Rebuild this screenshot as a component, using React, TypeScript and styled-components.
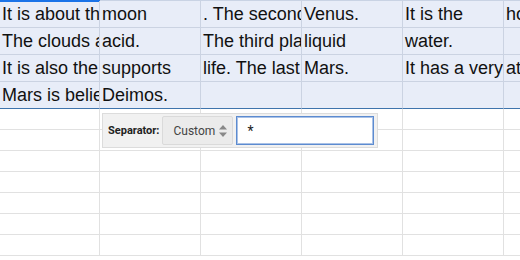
import styled, { createGlobalStyle } from 'styled-components';

const GlobalStyle = createGlobalStyle`
  html, body {
    margin: 0;
    padding: 0;
    background: #ffffff;
    overflow: hidden;
  }
  body {
    font-family: "Liberation Sans", Arial, sans-serif;
  }
`;

const Page = styled.div`
  position: relative;
  width: 520px;
  height: 260px;
  overflow: hidden;
`;

const Sheet = styled.div`
  display: grid;
  grid-template-columns: 100px repeat(5, 101px);
  border-top: 1px solid #c9d3e4;
  width: 610px;
`;

const Cell = styled.div<{ $selected?: boolean; $active?: boolean; $lastSel?: boolean }>`
  box-sizing: border-box;
  height: ${(p) => (p.$selected ? '27px' : '21px')};
  padding: 0 2px;
  border-right: 1px solid ${(p) => (p.$selected ? '#cbd3e2' : '#e1e1e1')};
  border-bottom: 1px solid
    ${(p) => (p.$lastSel ? '#3f74ac' : p.$selected ? '#cbd3e2' : '#e1e1e1')};
  background: ${(p) => (p.$selected ? '#e8edf8' : '#ffffff')};
  box-shadow: ${(p) => (p.$active ? 'inset 0 1px 0 #1a73e8, 0 -1px 0 #1a73e8' : 'none')};
  font-size: 18px;
  line-height: 26px;
  color: #111;
  white-space: nowrap;
  overflow: hidden;
`;

const Toolbar = styled.div`
  position: absolute;
  left: 102px;
  top: 113px;
  box-sizing: border-box;
  width: 276px;
  height: 35px;
  display: flex;
  align-items: center;
  gap: 3px;
  padding: 0 3px 0 5px;
  background: #f1f1f1;
  border: 1px solid #dcdcdc;
  font-family: Roboto, "Liberation Sans", Arial, sans-serif;
`;

const Label = styled.span`
  font-size: 11px;
  font-weight: bold;
  color: #222;
`;

const Select = styled.div`
  box-sizing: border-box;
  width: 71px;
  height: 29px;
  display: flex;
  align-items: center;
  justify-content: space-between;
  padding: 0 5px 0 10px;
  background: #ebebeb;
  border: 1px solid #dadada;
  border-radius: 2px;
  font-size: 12px;
  color: #444;
`;

const Input = styled.div`
  box-sizing: border-box;
  flex: 1;
  height: 29px;
  display: flex;
  align-items: center;
  padding-left: 10px;
  background: #fff;
  border: 1px solid #5c8bd0;
  box-shadow: inset 0 0 0 1px #a9c1e6;
  font-size: 14px;
  color: #222;
`;

const rows: string[][] = [
  ['It is about the', 'moon', '. The second', 'Venus.', 'It is the', 'hot'],
  ['The clouds are', 'acid.', 'The third planet', 'liquid', 'water.', ''],
  ['It is also the', 'supports', 'life. The last', 'Mars.', 'It has a very', 'at'],
  ['Mars is believed', 'Deimos.', '', '', '', ''],
];

const emptyRows = 7;

const Arrows = () => (
  <svg width="8" height="12" viewBox="0 0 8 12">
    <path d="M4 0 L8 4.5 L0 4.5 Z" fill="#888" />
    <path d="M0 7.5 L8 7.5 L4 12 Z" fill="#888" />
  </svg>
);

export default function App() {
  return (
    <Page>
      <GlobalStyle />
      <Sheet>
        {rows.map((r, ri) =>
          r.map((text, ci) => (
            <Cell
              key={`d${ri}-${ci}`}
              $selected
              $active={ri === 0 && ci === 0}
              $lastSel={ri === rows.length - 1}
            >
              {text}
            </Cell>
          ))
        )}
        {Array.from({ length: emptyRows }).map((_, ri) =>
          Array.from({ length: 6 }).map((__, ci) => <Cell key={`e${ri}-${ci}`} />)
        )}
      </Sheet>
      <Toolbar>
        <Label>Separator:</Label>
        <Select>
          Custom
          <Arrows />
        </Select>
        <Input>*</Input>
      </Toolbar>
    </Page>
  );
}
